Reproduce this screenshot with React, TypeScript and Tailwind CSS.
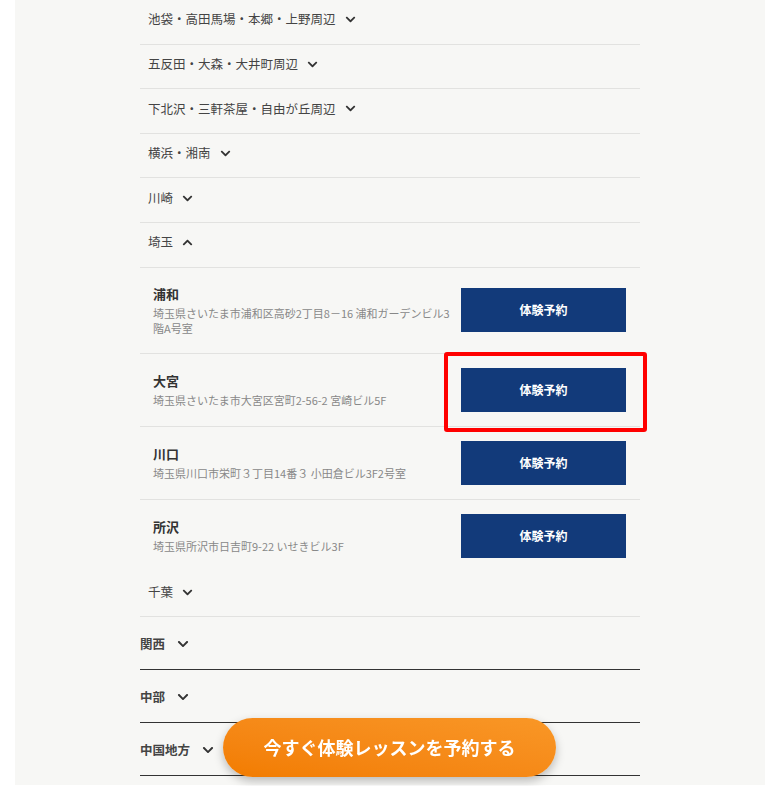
import { FaChevronDown, FaChevronUp } from "react-icons/fa";

const areas = [
  "池袋・高田馬場・本郷・上野周辺",
  "五反田・大森・大井町周辺",
  "下北沢・三軒茶屋・自由が丘周辺",
  "横浜・湘南",
  "川崎",
];

const schools = [
  { name: "浦和", address: "埼玉県さいたま市浦和区高砂2丁目8－16 浦和ガーデンビル3階A号室" },
  { name: "大宮", address: "埼玉県さいたま市大宮区宮町2-56-2 宮崎ビル5F", marked: true },
  { name: "川口", address: "埼玉県川口市栄町３丁目14番３ 小田倉ビル3F2号室" },
  { name: "所沢", address: "埼玉県所沢市日吉町9-22 いせきビル3F" },
];

const regions = ["関西", "中部", "中国地方"];

function AreaRow({ label, open = false }: { label: string; open?: boolean }) {
  return (
    <div className="h-[44.6px] flex items-center gap-[9px] pl-[8px] pb-[4px] border-b border-[#e2e2e0] text-[12.5px] text-[#444]">
      <span>{label}</span>
      {open ? <FaChevronUp size={11} className="text-[#333]" /> : <FaChevronDown size={11} className="text-[#333]" />}
    </div>
  );
}

export default function App() {
  return (
    <div
      className="h-[786px] overflow-hidden bg-white"
      style={{ fontFamily: '"Noto Sans CJK JP", "Noto Sans", sans-serif' }}
    >
      <div className="ml-[15px] w-[750px] h-[785px] bg-[#f7f7f5]">
        <div className="mx-auto w-[500px]">
          {areas.map((a) => (
            <AreaRow key={a} label={a} />
          ))}
          <AreaRow label="埼玉" open />

          {/* 埼玉の教室 */}
          {schools.map((s, i) => (
            <div
              key={s.name}
              className={`relative flex items-center gap-[10px] pl-[13px] pr-[14px] pt-[14px] ${
                i < schools.length - 1 ? "pb-[14px] border-b border-[#e2e2e0]" : "pb-[15px]"
              }`}
            >
              <div className="flex-1 py-[2.5px]">
                <div className="text-[13px] leading-[20px] font-bold text-[#333]">{s.name}</div>
                <div className="mt-[2px] text-[11px] leading-[15px] text-[#888]">{s.address}</div>
              </div>
              <button className="w-[165px] h-[44px] shrink-0 bg-[#123a7a] text-white text-[12px] font-semibold">
                体験予約
              </button>
              {s.marked && (
                <div className="absolute left-[304px] top-[-2px] w-[203px] h-[80px] border-[4px] border-[#ff0000] rounded-[3px]" />
              )}
            </div>
          ))}

          <AreaRow label="千葉" />

          {regions.map((r) => (
            <div
              key={r}
              className="h-[53px] flex items-center gap-[12px] pt-[2px] border-b border-[#333] text-[12.5px] font-bold text-[#444]"
            >
              <span>{r}</span>
              <FaChevronDown size={12} className="text-[#333]" />
            </div>
          ))}
        </div>
      </div>

      {/* 固定CTA */}
      <button className="fixed bottom-[9px] left-[223px] w-[333px] h-[59px] rounded-full bg-gradient-to-tr from-[#f27c00] to-[#f99726] text-white text-[18px] font-bold shadow-[0_4px_10px_rgba(0,0,0,0.25)]">
        今すぐ体験レッスンを予約する
      </button>
    </div>
  );
}
